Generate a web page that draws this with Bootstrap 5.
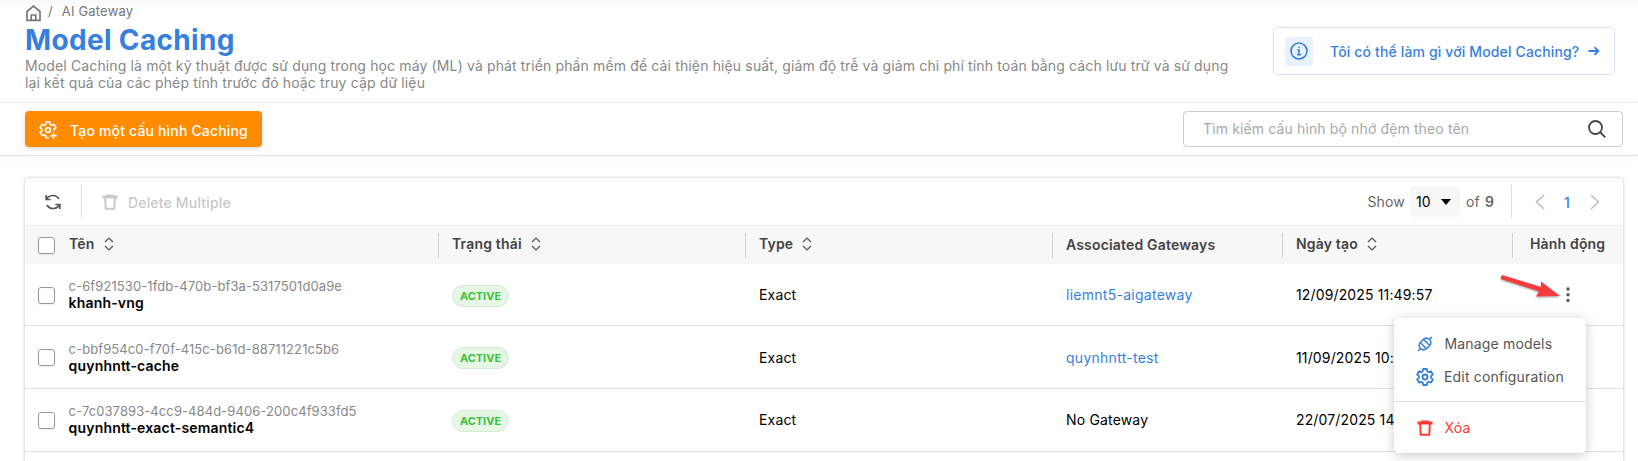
<!DOCTYPE html>
<html lang="vi">
<head>
<meta charset="utf-8">
<meta name="viewport" content="width=device-width, initial-scale=1">
<title>Model Caching</title>
<link href="https://cdn.jsdelivr.net/npm/bootstrap@5.3.0/dist/css/bootstrap.min.css" rel="stylesheet">
<style>
:root{--brand:#367fde;--muted:#888}
body{font-family:Inter,"Liberation Sans",sans-serif;font-size:14px;line-height:17px;letter-spacing:.17px;color:#000;background:#fff;height:461px;overflow:hidden}
svg{display:block;flex:none}
.page-head{height:103px;border-bottom:1px solid #ebebeb;padding:0 23px 0 25px;background:linear-gradient(#f8f8f8,#fff 8px)}
.crumbs{font-size:13px;color:#777;height:22px;line-height:22px}
.page-title{font-size:28px;line-height:34px;font-weight:700;color:var(--brand);margin:1px 0 0;letter-spacing:.34px}
.page-desc{color:var(--muted);width:1212px;letter-spacing:.135px}
.help-link{width:342px;height:48px;margin-top:27px;border:1px solid #d3e3f8;border-radius:5px;color:var(--brand);font-weight:500;padding-left:11px;letter-spacing:.14px}
.help-icon{width:28px;height:29px;background:#e9f2fc;border-radius:3px}
.actions{height:53px;border-bottom:1px solid #e2e2e2;padding:8px 15px 0 25px;box-shadow:0 2px 6px rgba(0,0,0,.04)}
.btn-create{width:237px;height:36px;background:#ff8c00;color:#fff;border:0;border-radius:4px;font-size:14px;font-weight:500;padding:0 0 0 14px;line-height:17px;letter-spacing:.17px;box-shadow:0 2px 4px rgba(0,0,0,.15)}
.btn-create:hover{background:#f38500;color:#fff}
.search-box{width:440px;height:36px;border:1px solid #ccc;border-radius:4px;padding:0 16px 0 19px}
.search-box input{font-size:14px;padding:0 0 2px;line-height:17px;letter-spacing:.13px}
.search-box input::placeholder{color:#a8a8a8;opacity:1}
.panel{margin:21px 14px 0 24px;border:1px solid #e6e6e6;border-radius:6px 6px 0 0;height:300px;box-shadow:0 0 1px 1px #f3f3f3}
.tools{height:48px;padding-left:20px;border-bottom:1px solid #ebebeb}
.vline{width:1px;height:33px;background:#ddd}
.size-select{width:50px;height:31px;background:#f7f7f7;border-radius:4px;color:#000}
.grid-table{table-layout:fixed;width:1598px;border-collapse:separate;border-spacing:0}
.grid-table th{background:#f7f7f7;height:38px;padding:0 0 1px 14px;font-weight:600;color:#444;position:relative}
.grid-table th.ruled::before{content:"";position:absolute;left:0;top:7px;width:1px;height:25px;background:#d0d0d0}
.grid-table th .d-flex{margin-top:-2px}
.grid-table td{height:63px;padding:0 0 0 14px;border-bottom:1px solid #e0e0e0}
.grid-table tbody tr:first-child td{height:62px}
.grid-table tbody tr:last-child td:not(.pick){padding-bottom:2px}
.grid-table .pick{padding:1px 0 0 13px}
.tick{width:17px;height:17px;border:1px solid #999;border-radius:3px;box-shadow:0 1px 2px rgba(0,0,0,.08);margin:0;appearance:none;display:block;background:#fff}
.cid{color:var(--muted);font-size:13px;letter-spacing:.09px;line-height:16px;margin-left:-.4px}
.cname{font-weight:600;margin-left:-.4px}
.stamp{letter-spacing:.14px}
.status{width:57px;height:22px;border-radius:11px;background:#e5f6e5;border:1px solid #d3efd3;color:#3cc13b;font-size:11px;font-weight:700;line-height:20px;text-align:center;letter-spacing:0;margin-top:2px}
.gw{color:var(--brand);text-decoration:none;letter-spacing:.27px}
.sort{margin-left:9px;fill:none;stroke:#555;stroke-width:1.2}
.row-menu{position:absolute;left:1394px;top:318px;width:192px;height:135px;background:#fff;border-radius:5px;box-shadow:0 2px 12px rgba(0,0,0,.22);color:#555;padding:9px 0}
.entry{height:33px;padding-left:23px}
.entry span{margin-left:11.5px}
.split{height:1px;background:#ddd;margin:8px 0 9px}
.pointer{position:absolute;left:1499px;top:272px;filter:drop-shadow(0 1px 1px rgba(0,0,0,.35))}
</style>
</head>
<body>
<header class="page-head d-flex justify-content-between">
  <div>
    <nav class="crumbs d-flex align-items-center">
      <svg class="mt-1" width="17" height="17" viewBox="0 0 17 17" fill="none" stroke="#777" stroke-width="1.7"><path d="M2 6.500v8.800h13V6.500L8.500 1.200z"/><path d="M6.200 15V10h4.600v5"/></svg>
      <span style="margin-left:6px">/</span><span style="margin-left:9px">AI Gateway</span>
    </nav>
    <h1 class="page-title">Model Caching</h1>
    <div class="page-desc">Model Caching là một kỹ thuật được sử dụng trong học máy (ML) và phát triển phần mềm để cải thiện hiệu suất, giảm độ trễ và giảm chi phí tính toán bằng cách lưu trữ và sử dụng lại kết quả của các phép tính trước đó hoặc truy cập dữ liệu</div>
  </div>
  <a class="help-link d-flex align-items-center text-decoration-none" href="#">
    <span class="help-icon d-flex align-items-center justify-content-center"><svg width="18" height="18" viewBox="0 0 18 18" fill="none" stroke="#367fde" stroke-width="1.6"><circle cx="9" cy="9" r="8"/><path d="M7.300 8H9v4.500M7 12.700h4"/><circle cx="9" cy="5.300" r=".6" fill="#367fde" stroke-width=".6"/></svg></span>
    <span style="margin-left:17px">Tôi có thể làm gì với Model Caching?</span>
    <svg style="margin-left:9px" width="12" height="10" viewBox="0 0 12 10" fill="none" stroke="#367fde" stroke-width="1.8"><path d="M.5 5H10M6.500 1.200L10.400 5 6.500 8.800"/></svg>
  </a>
</header>
<section class="actions d-flex justify-content-between">
  <button class="btn btn-create d-flex align-items-center"><svg style="margin-top:2px" width="18" height="18" viewBox="-9 -9 18 18" fill="none" stroke="#fff" stroke-width="1.600" stroke-linejoin="round"><path d="M1 7.800H-1.800L-2.300 5.700-3.790 4.840-6.030 5.560-7.830 2.440-6.090.86V-.86L-7.830-2.440-6.030-5.560-3.790-4.840-2.300-5.700-1.800-8H1.800L2.300-5.700 3.790-4.840 6.030-5.560 7.830-2.440 6.090-.86V1"/><circle r="2.400"/><path d="M5.500 2.500v6.500M2.300 5.700h6.500"/></svg><span style="margin-left:13px;margin-top:3px">Tạo một cấu hình Caching</span></button>
  <div class="search-box d-flex align-items-center">
    <input class="form-control border-0 shadow-none bg-transparent" placeholder="Tìm kiếm cấu hình bộ nhớ đệm theo tên">
    <svg width="18" height="18" viewBox="0 0 18 18" fill="none" stroke="#444" stroke-width="1.8"><circle cx="7.500" cy="7.500" r="6.500"/><path d="M12 12l5.300 5.300"/></svg>
  </div>
</section>
<main class="panel">
  <div class="tools d-flex align-items-center">
    <svg width="16" height="16" viewBox="0 0 16 16" fill="none" stroke="#555" stroke-width="1.7"><path d="M1.200 1v4.500h4.500M1.500 5.300C3.500.8 11-.2 14 5M14.800 15v-4.500h-4.500M14.500 10.700C12.500 15.200 5 16.200 2 11"/></svg>
    <span class="vline" style="margin-left:20px"></span>
    <span class="d-flex align-items-center" style="margin-left:20px;color:#c8c8c8;font-weight:500"><svg width="16" height="16" viewBox="0 0 16 16" fill="none" stroke="#c8c8c8" stroke-width="2"><path d="M.5 3h15" stroke-width="3"/><path d="M4 1.400h8M3.200 4l.5 10.700h8.600L12.800 4"/></svg><span style="margin-left:10px;margin-top:2px">Delete Multiple</span></span>
    <div class="d-flex align-items-center ms-auto" style="color:#666">
      <span>Show</span>
      <span class="size-select d-flex align-items-center" style="margin-left:5px;padding-left:6px">10<svg style="margin-left:10px" width="10" height="6"><path d="M0 0h10L5 6z"/></svg></span>
      <span style="margin-left:6px">of</span><span class="fw-semibold" style="margin-left:5px">9</span>
      <span class="vline" style="margin-left:17px"></span>
      <svg style="margin-left:23px" width="10" height="16" fill="none" stroke="#bbb" stroke-width="1.5"><path d="M9 1L1.500 8 9 15"/></svg>
      <span style="margin-left:19px;margin-top:1px;color:#367fde;font-weight:500">1</span>
      <svg style="margin:0 23px 0 20px" width="10" height="16" fill="none" stroke="#bbb" stroke-width="1.500"><path d="M1 1l7.500 7L1 15"/></svg>
    </div>
  </div>
  <table class="grid-table">
    <colgroup><col style="width:30px"><col style="width:383px"><col style="width:307px"><col style="width:307px"><col style="width:230px"><col style="width:230px"><col style="width:111px"></colgroup>
    <thead><tr>
      <th class="pick"><input type="checkbox" class="tick"></th>
      <th><span class="d-flex align-items-center">Tên <svg class="sort" width="10" height="14" viewBox="0 0 10 14"><path d="M1 5l4-4 4 4M1 9l4 4 4-4"/></svg></span></th>
      <th class="ruled"><span class="d-flex align-items-center">Trạng thái <svg class="sort" width="10" height="14" viewBox="0 0 10 14"><path d="M1 5l4-4 4 4M1 9l4 4 4-4"/></svg></span></th>
      <th class="ruled"><span class="d-flex align-items-center">Type <svg class="sort" width="10" height="14" viewBox="0 0 10 14"><path d="M1 5l4-4 4 4M1 9l4 4 4-4"/></svg></span></th>
      <th class="ruled">Associated Gateways</th>
      <th class="ruled"><span class="d-flex align-items-center">Ngày tạo <svg class="sort" width="10" height="14" viewBox="0 0 10 14"><path d="M1 5l4-4 4 4M1 9l4 4 4-4"/></svg></span></th>
      <th class="ruled" style="padding-left:18px"><span class="d-flex">Hành động</span></th>
    </tr></thead>
    <tbody>
      <tr><td class="pick"><input type="checkbox" class="tick"></td><td><div class="cid">c-6f921530-1fdb-470b-bf3a-5317501d0a9e</div><div class="cname">khanh-vng</div></td><td><div class="status">ACTIVE</div></td><td>Exact</td><td><a class="gw" href="#">liemnt5-aigateway</a></td><td class="stamp">12/09/2025 11:49:57</td><td><svg style="margin-left:40px;margin-top:1px" width="4" height="16" fill="#555"><circle cx="2" cy="2" r="1.700"/><circle cx="2" cy="7.700" r="1.700"/><circle cx="2" cy="13.400" r="1.700"/></svg></td></tr>
      <tr><td class="pick"><input type="checkbox" class="tick"></td><td><div class="cid">c-bbf954c0-f70f-415c-b61d-88711221c5b6</div><div class="cname">quynhntt-cache</div></td><td><div class="status">ACTIVE</div></td><td>Exact</td><td><a class="gw" href="#">quynhntt-test</a></td><td class="stamp">11/09/2025 10:</td><td></td></tr>
      <tr><td class="pick"><input type="checkbox" class="tick"></td><td><div class="cid">c-7c037893-4cc9-484d-9406-200c4f933fd5</div><div class="cname">quynhntt-exact-semantic4</div></td><td><div class="status mt-1">ACTIVE</div></td><td>Exact</td><td>No Gateway</td><td class="stamp">22/07/2025 14</td><td></td></tr>
    </tbody>
  </table>
</main>
<div class="row-menu">
  <div class="entry d-flex align-items-center"><svg width="16" height="16" viewBox="0 0 16 16" fill="none" stroke="#367fde" stroke-width="1.5" stroke-linejoin="round"><path d="M1 15L3.500 12.500M12.500 3.500L15 1M3.300 6.500L9.500 12.700C7.500 14.200 5 14 3.500 12.500S1.800 8.500 3.300 6.500zM6.500 3.300L12.700 9.500C14.200 7.500 14 5 12.500 3.500S8.500 1.800 6.500 3.300zM3.300 6.500L6.500 3.300M9.500 12.700L12.700 9.500"/></svg><span>Manage models</span></div>
  <div class="entry d-flex align-items-center"><svg style="margin-left:-1px" width="18" height="18" viewBox="-9 -9 18 18" fill="none" stroke="#367fde" stroke-width="1.800" stroke-linejoin="round"><path d="M-1.800 8L-2.300 5.700-3.790 4.840-6.030 5.560-7.830 2.440-6.090.86V-.86L-7.830-2.440-6.030-5.560-3.790-4.840-2.300-5.700-1.800-8H1.800L2.300-5.700 3.790-4.840 6.030-5.560 7.830-2.440 6.090-.86V.86L7.830 2.440 6.030 5.560 3.790 4.840 2.300 5.700 1.800 8z"/><circle r="2.500"/></svg><span style="margin-left:10px">Edit configuration</span></div>
  <div class="split"></div>
  <div class="entry d-flex align-items-center" style="color:#ff3b30"><svg width="16" height="16" viewBox="0 0 16 16" fill="none" stroke="#ff3b30" stroke-width="2"><path d="M.5 3h15" stroke-width="3"/><path d="M4 1.400h8M3.200 4l.5 10.700h8.600L12.800 4"/></svg><span>Xóa</span></div>
</div>
<svg class="pointer" width="64" height="30"><path d="M3 3L1.500 7 40 19.500 37 24.500 61 24 42 9.500 42 15z" fill="#f43b3b"/></svg>
<script src="https://cdn.jsdelivr.net/npm/bootstrap@5.3.0/dist/js/bootstrap.bundle.min.js"></script>
</body>
</html>
